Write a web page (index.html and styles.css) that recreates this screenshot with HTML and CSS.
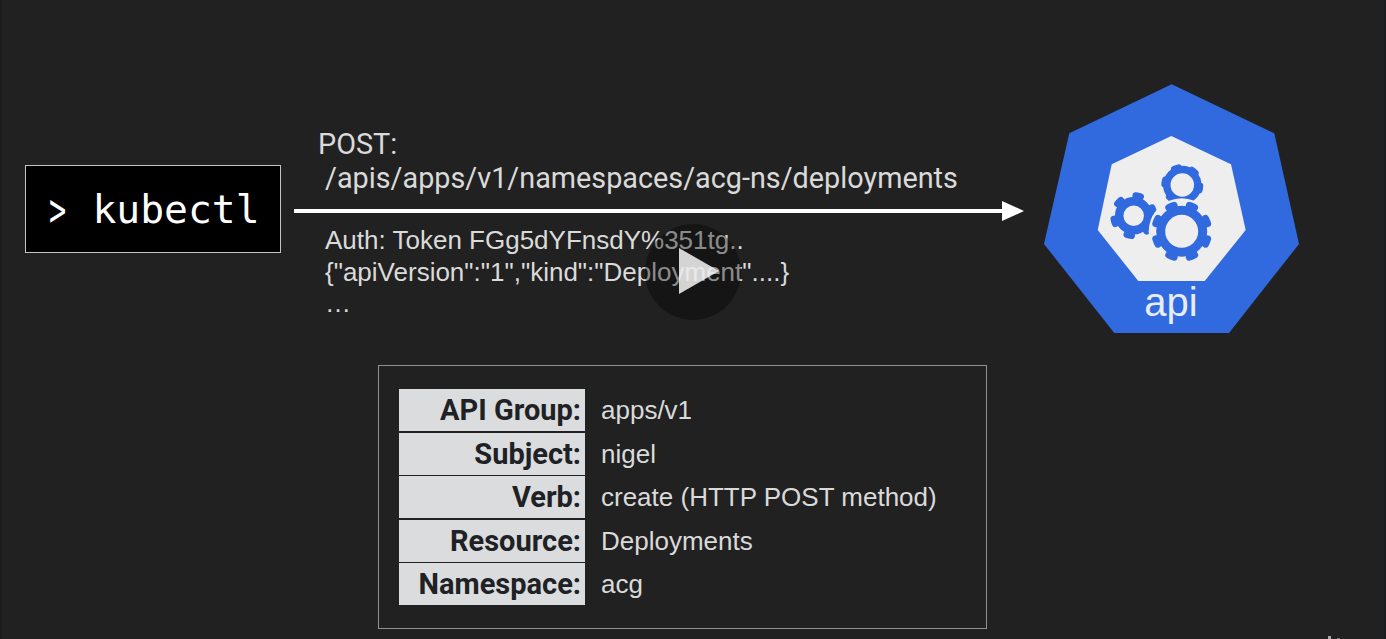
FILE: index.html
```html
<!DOCTYPE html>
<html lang="en">
<head>
<meta charset="utf-8">
<title>kubectl API request</title>
<link rel="stylesheet" href="styles.css">
</head>
<body>
<main class="slide">
  <div class="kubectl"><span class="prompt">&gt;</span> kubectl</div>
  <div class="post">POST:</div>
  <div class="path">/apis/apps/v1/namespaces/acg-ns/deployments</div>
  <svg class="arrow" width="732" height="22" viewBox="0 0 732 22" aria-hidden="true">
    <rect x="0" y="9" width="712" height="4" fill="#fff"/>
    <polygon points="708,1 730,11 708,21" fill="#fff"/>
  </svg>
  <div class="request">
    <div>Auth: Token FGg5dYFnsdY%351tg..</div>
    <div>{"apiVersion":"1","kind":"Deployment"....}</div>
    <div>…</div>
  </div>

  <svg class="api" width="256" height="250" viewBox="1044 84 256 250" role="img" aria-label="api">
    <polygon class="hept" points="1171.7,84.3 1274.3,133.3 1299,244 1229,333 1114.3,333 1044,244 1069.3,133.3"/>
    <polygon class="inner" points="1171.3,136 1231,164.3 1245.7,230 1204.7,281 1138.3,281 1097.7,230 1111.7,164.3"/>
    <g class="gear">
      <circle cx="1133.7" cy="215.7" r="14.5" stroke-width="8.5"/>
      <circle cx="1133.7" cy="215.7" r="20" stroke-width="7" pathLength="6" stroke-dasharray="0.22 0.78" stroke-linecap="round" stroke-dashoffset="0.39"/>
      <circle cx="1182.3" cy="185" r="15.5" stroke-width="7.5"/>
      <circle cx="1182.3" cy="185" r="18" stroke-width="6" pathLength="6" stroke-dasharray="0.26 0.74" stroke-linecap="round" stroke-dashoffset="0.96"/>
    </g>
    <circle class="halo" cx="1181.7" cy="231.3" r="33"/>
    <g class="gear">
      <circle cx="1181.7" cy="231.3" r="21" stroke-width="9"/>
      <circle cx="1181.7" cy="231.3" r="27" stroke-width="7" pathLength="8" stroke-dasharray="0.27 0.73" stroke-linecap="round" stroke-dashoffset="0.635"/>
    </g>
    <text class="api-label" x="1171" y="316" text-anchor="middle">api</text>
  </svg>

  <section class="details">
    <div class="label">API Group:</div><div class="value">apps/v1</div>
    <div class="label">Subject:</div><div class="value">nigel</div>
    <div class="label">Verb:</div><div class="value">create (HTTP POST method)</div>
    <div class="label">Resource:</div><div class="value">Deployments</div>
    <div class="label">Namespace:</div><div class="value">acg</div>
  </section>

  <div class="play" aria-hidden="true"><span class="tri"></span></div>
  <div class="corner" aria-hidden="true"></div>
</main>
</body>
</html>
```
FILE: styles.css
```css
* { box-sizing: border-box; }
html, body { margin: 0; padding: 0; }
body { background: #212121; overflow: hidden; }
.slide {
  position: relative;
  width: 1386px;
  height: 639px;
  overflow: hidden;
  background: #212121;
  border-left: 2px solid #1b1e21;
  border-right: 2px solid #1b1e21;
  font-family: "Liberation Sans", Arial, sans-serif;
  color: #dadada;
}
.kubectl {
  position: absolute;
  left: 23px;
  top: 165px;
  width: 256px;
  height: 88px;
  background: #000;
  border: 1px solid #c4c4c4;
  color: #fff;
  font-family: "DejaVu Sans Mono", monospace;
  font-size: 39.7px;
  line-height: 86px;
  padding-left: 23px;
  white-space: nowrap;
}
.prompt {
  display: inline-block;
  width: 19.5px;
  font-size: 46px;
  line-height: 40px;
  vertical-align: -3px;
  transform: scaleX(0.62);
  transform-origin: left center;
}
.post, .path, .request { position: absolute; white-space: nowrap; }
.post, .path { font-family: Roboto, "Liberation Sans", sans-serif; font-size: 28.8px; }
.post { left: 316px; top: 127px; line-height: 34px; }
.path { left: 323px; top: 160px; line-height: 36px; }
.arrow { position: absolute; left: 292px; top: 200px; }
.request { left: 323px; top: 225px; font-size: 26px; line-height: 31.5px; }
.api { position: absolute; left: 1042px; top: 84px; }
.hept { fill: #316ade; }
.inner { fill: #eeeeee; }
.halo { fill: #eeeeee; }
.gear circle { fill: none; stroke: #316ade; }
.api-label { font-family: "Liberation Sans", sans-serif; font-size: 40px; fill: #e6ecf8; }
.details {
  position: absolute;
  left: 376px;
  top: 365px;
  width: 609px;
  height: 264px;
  border: 1px solid #8f8f8f;
  padding: 23px 20px 0;
  display: grid;
  grid-template-columns: 186px 1fr;
  grid-auto-rows: 42px;
  row-gap: 1.5px;
  column-gap: 16px;
  font-size: 26px;
  align-content: start;
}
.label {
  background: #dadcde;
  color: #202124;
  font-family: Roboto, "Liberation Sans", sans-serif;
  font-size: 29px;
  font-weight: 700;
  text-align: right;
  line-height: 42px;
  padding-right: 4px;
}
.value { line-height: 42px; white-space: nowrap; }
.play {
  position: absolute;
  left: 643px;
  top: 224px;
  width: 96px;
  height: 96px;
  border-radius: 50%;
  background: rgba(0, 0, 0, 0.36);
}
.tri {
  position: absolute;
  left: 34px;
  top: 24px;
  border-style: solid;
  border-width: 23px 0 23px 40px;
  border-color: transparent transparent transparent rgba(255, 255, 255, 0.82);
}
.corner {
  position: absolute;
  left: 1326px;
  top: 636px;
  width: 3px;
  height: 4px;
  background: #a8a8a8;
  box-shadow: 9px 2px 0 #777;
}
```
